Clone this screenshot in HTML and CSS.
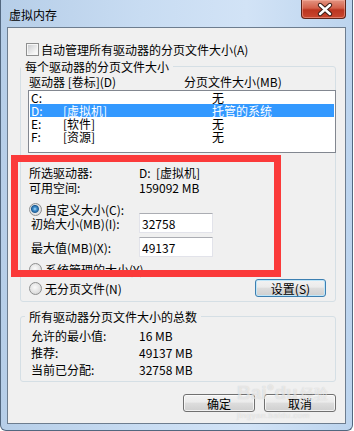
FILE: index.html
```html
<!DOCTYPE html>
<html lang="zh-CN">

<head>
  <meta charset="UTF-8">
  <meta name="viewport" content="width=device-width, initial-scale=1.0">
  <title>虚拟内存</title>
  <link rel="stylesheet" href="styles.css">
</head>

<body>
  <div class="window">
    <div class="titlebar">
      <span class="title">虚拟内存</span>
      <div class="close-btn">
        <svg width="45" height="19" viewBox="0 0 45 19">
          <path d="M19 5 L29 14 M29 5 L19 14" stroke="#3a1d17" stroke-width="4.4" stroke-linecap="round"/>
          <path d="M19 5 L29 14 M29 5 L19 14" stroke="#ffffff" stroke-width="2.4" stroke-linecap="round"/>
        </svg>
      </div>
    </div>

    <div class="client">
      <div class="check-row">
        <span class="checkbox"></span>
        <span>自动管理所有驱动器的分页文件大小(A)</span>
      </div>

      <fieldset class="group group-drives">
        <legend>每个驱动器的分页文件大小</legend>
        <div class="list-head">
          <span>驱动器 [卷标](D)</span>
          <span>分页文件大小(MB)</span>
        </div>
        <div class="listbox">
          <div class="list-row"><span>C:</span><span></span><span>无</span></div>
          <div class="list-row selected"><span>D:</span><span>[虚拟机]</span><span>托管的系统</span></div>
          <div class="list-row"><span>E:</span><span>[软件]</span><span>无</span></div>
          <div class="list-row"><span>F:</span><span>[资源]</span><span>无</span></div>
        </div>

        <div class="info-row first"><span>所选驱动器:</span><span>D:&nbsp;&nbsp;[虚拟机]</span></div>
        <div class="info-row"><span>可用空间:</span><span>159092 MB</span></div>

        <div class="radio-row custom"><span class="radio checked"></span><span>自定义大小(C):</span></div>
        <div class="input-row first"><span class="input-label">初始大小(MB)(I):</span><input class="size-input" type="text" value="32758"></div>
        <div class="input-row"><span class="input-label">最大值(MB)(X):</span><input class="size-input" type="text" value="49137"></div>
        <div class="radio-row system"><span class="radio"></span><span>系统管理的大小(Y)</span></div>
        <div class="radio-row nopage">
          <span class="radio"></span><span>无分页文件(N)</span>
          <button class="btn btn-focus btn-set">设置(S)</button>
        </div>
      </fieldset>

      <fieldset class="group group-total">
        <legend>所有驱动器分页文件大小的总数</legend>
        <div class="total-row first"><span>允许的最小值:</span><span>16 MB</span></div>
        <div class="total-row"><span>推荐:</span><span>49137 MB</span></div>
        <div class="total-row"><span>当前已分配:</span><span>32758 MB</span></div>
      </fieldset>

      <div class="dialog-buttons">
        <button class="btn">确定</button>
        <button class="btn">取消</button>
      </div>
    </div>

    <div class="mark-box"></div>
    <div class="watermark">
      <span class="wm-bai">Bai</span><span class="wm-paw">&#9679;</span><span class="wm-du">du</span><span class="wm-cn">经验</span>
      <div class="wm-url">jingyan.baidu.com</div>
    </div>
  </div>
</body>
</html>
```

FILE: styles.css
```css
* {
  box-sizing: border-box;
}
body {
  margin: 0;
  background: #ffffff;
  font-family: "Noto Sans CJK SC", "Noto Sans", sans-serif;
  font-size: 12px;
  line-height: 13px;
  color: #000;
  overflow: hidden;
}
.window {
  position: relative;
  width: 353px;
  height: 431px;
  padding: 0 6px 6px;
  border: 1px solid #52677f;
  border-top: 0;
  border-radius: 0 0 6px 6px;
  background: linear-gradient(to right, #b6cee8, #c8dcf2 40%, #d2e3f6 70%, #bcd4ee);
  display: flex;
  flex-direction: column;
}
.titlebar {
  height: 27px;
  display: flex;
  align-items: flex-start;
}
.title {
  margin: 8px 0 0 2px;
}
.close-btn {
  margin-left: auto;
  width: 45px;
  height: 19px;
  border: 1px solid #5e2419;
  border-top: 0;
  border-radius: 0 0 4px 4px;
  background: linear-gradient(#e39481, #d3604a 45%, #bb3520 55%, #c9472f);
  box-shadow: inset 0 0 0 1px rgba(255, 190, 175, 0.45);
}
.close-btn svg {
  display: block;
  margin-left: -1px;
}
.client {
  flex: 1;
  background: #f0f0f0;
  border: 1px solid #6d7d8f;
  padding: 15px 9px 0 12px;
}

/* checkbox and radio */
.check-row {
  display: flex;
  align-items: center;
  gap: 2px;
  height: 13px;
  margin-left: 6px;
}
.checkbox {
  width: 13px;
  height: 13px;
  border: 1px solid #8e8f8f;
  background: linear-gradient(135deg, #c6c8cb, #f3f3f3 70%, #ffffff);
  box-shadow: inset 0 0 0 1px #f6f6f6;
}
.radio {
  width: 13px;
  height: 13px;
  flex: none;
  border-radius: 50%;
  border: 1px solid #8e8f8f;
  background: radial-gradient(circle at 45% 40%, #fafafa, #e0e0e0 60%, #c8c8c8);
}
.radio.checked {
  background: radial-gradient(circle at 45% 45%, #b9e3fb 0, #4e9bd6 1.5px, #1d5d95 3.5px, #e6e6e6 4.5px, #d0d0d0);
}

/* group boxes */
.group {
  margin: 4px 0 0;
  padding: 0;
  min-inline-size: 0;
  border: 1px solid #d5dfe5;
  border-radius: 3px;
}
.group legend {
  padding: 0 4px;
  margin-left: 0;
  line-height: 13px;
}
.list-head {
  display: grid;
  grid-template-columns: 155px 1fr;
  margin-top: 2px;
  padding-left: 8px;
}
.listbox {
  width: 308px;
  height: 63px;
  margin: 2px 0 0 7px;
  background: #fff;
  border: 1px solid #828790;
}
.list-row {
  display: grid;
  grid-template-columns: 32px 149px 1fr;
  height: 13px;
  margin: 0 1px;
  padding-left: 1px;
  white-space: nowrap;
}
.list-row.selected {
  background: #3399ff;
  color: #fff;
}
.info-row {
  display: grid;
  grid-template-columns: 110px 1fr;
  padding-left: 8px;
  margin-top: 2px;
}
.info-row.first {
  margin-top: 13px;
}
.radio-row {
  display: flex;
  align-items: center;
  gap: 3px;
  height: 13px;
  padding-left: 8px;
}
.radio-row.custom {
  margin-top: 9px;
}
.radio-row.system {
  margin-top: 6px;
}
.radio-row.nopage {
  height: 18px;
  margin: 3px 0 4px;
}
.input-row {
  display: flex;
  align-items: center;
  height: 20px;
  padding-left: 10px;
  margin-top: 4px;
}
.input-row.first {
  margin-top: -3px;
}
.input-label {
  width: 108px;
}
.size-input {
  width: 74px;
  height: 20px;
  padding: 0 2px;
  font: inherit;
  border: 1px solid #e2e3ea;
  border-top-color: #abadb3;
  background: #fff;
}

/* buttons */
.btn {
  width: 72px;
  height: 18px;
  padding: 0;
  font: inherit;
  color: #000;
  border: 1px solid #707070;
  border-radius: 3px;
  background: linear-gradient(#f2f2f2, #ebebeb 45%, #dddddd 50%, #cfcfcf);
  box-shadow: inset 0 0 0 1px rgba(255, 255, 255, 0.7);
}
.btn-focus {
  border-color: #3c7fb1;
  box-shadow: inset 0 0 0 1px #bfe6f9;
}
.btn-set {
  width: 71px;
  margin-left: auto;
  margin-right: 9px;
}
.group-total {
  margin-top: 8px;
}
.group-total legend {
  margin-left: 4px;
}
.total-row {
  display: grid;
  grid-template-columns: 108px 1fr;
  padding-left: 10px;
  margin-top: 4px;
}
.total-row.first {
  margin-top: 6px;
}
.group-total .total-row:last-child {
  margin-bottom: 5px;
}
.dialog-buttons {
  display: flex;
  justify-content: flex-end;
  gap: 9px;
  margin-top: 12px;
}

/* overlays */
.mark-box {
  position: absolute;
  left: 10px;
  top: 155px;
  width: 270px;
  height: 122px;
  border: 7px solid #fb3a3a;
}
.watermark {
  position: absolute;
  left: 236px;
  top: 380px;
  color: rgba(255, 255, 255, 0.55);
  text-shadow: 0 0 1px rgba(120, 120, 120, 0.35);
  font-family: "Liberation Sans", sans-serif;
  white-space: nowrap;
}
.wm-bai,
.wm-du {
  font-size: 19px;
  font-weight: bold;
}
.wm-paw {
  font-size: 13px;
  vertical-align: 8px;
}
.wm-cn {
  font-family: "Noto Sans CJK SC", sans-serif;
  font-size: 14px;
  margin-left: 2px;
}
.wm-url {
  font-size: 8px;
  line-height: 9px;
  margin-top: 9px;
  letter-spacing: 0.5px;
}
```
